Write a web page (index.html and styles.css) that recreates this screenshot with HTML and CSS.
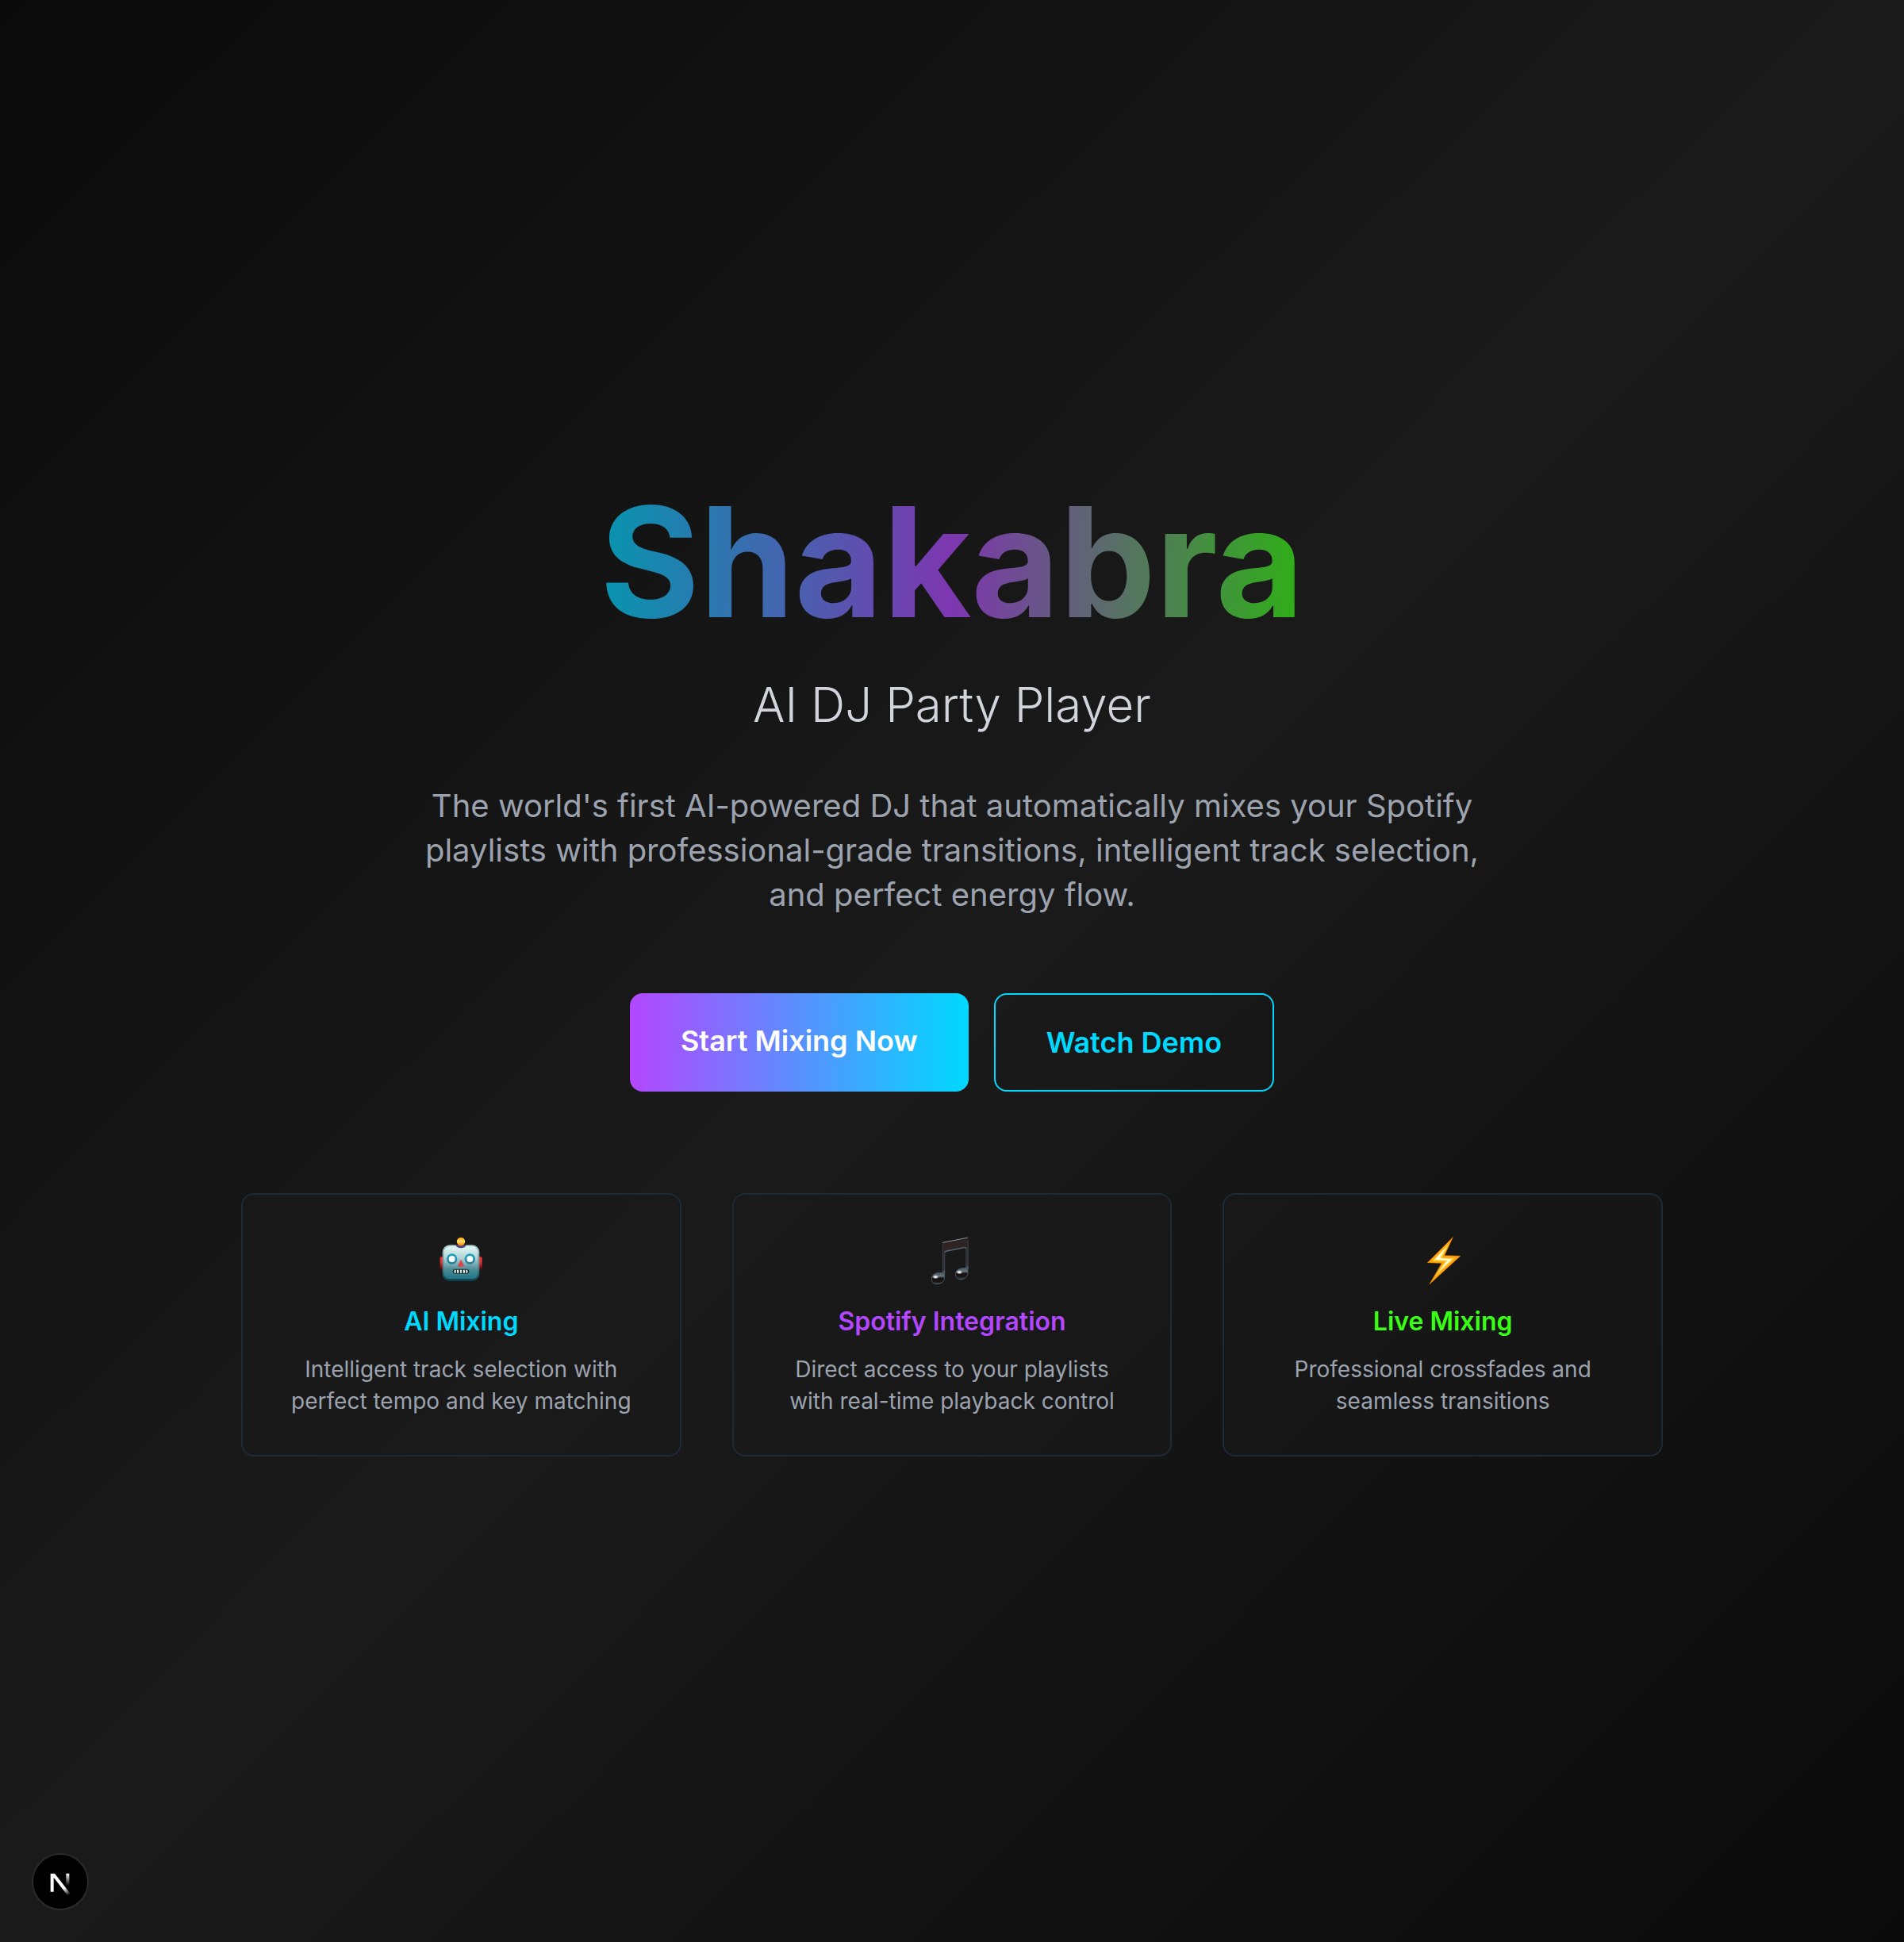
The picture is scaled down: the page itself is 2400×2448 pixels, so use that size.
FILE: index.html
```html
<!DOCTYPE html>
<html lang="en">
<head>
<meta charset="utf-8">
<meta name="viewport" content="width=device-width, initial-scale=1">
<title>Shakabra - AI DJ Party Player</title>
<link rel="stylesheet" href="styles.css">
</head>
<body>
<main class="page">
  <div class="hero">
    <h1 class="title">Shakabra</h1>
    <p class="subtitle">AI DJ Party Player</p>
    <p class="lead">The world's first AI-powered DJ that automatically mixes your Spotify playlists with professional-grade transitions, intelligent track selection, and perfect energy flow.</p>
    <div class="actions">
      <a class="btn btn-primary" href="#start">Start Mixing Now</a>
      <a class="btn btn-outline" href="#demo">Watch Demo</a>
    </div>
    <div class="features">
      <section class="card">
        <svg class="icon" viewBox="58 42 192 216" aria-hidden="true">
          <defs>
            <linearGradient id="face" x1="0" y1="0" x2="0" y2="1"><stop offset="0" stop-color="#e2f8f6"/><stop offset=".35" stop-color="#b3d3d5"/><stop offset=".7" stop-color="#4c8d98"/><stop offset="1" stop-color="#1f7484"/></linearGradient>
            <linearGradient id="rim" x1="0" y1="0" x2="0" y2="1"><stop offset="0" stop-color="#a9c9c8"/><stop offset=".5" stop-color="#6d9297"/><stop offset="1" stop-color="#053d49"/></linearGradient>
            <linearGradient id="ear" x1="0" y1="0" x2="0" y2="1"><stop offset="0" stop-color="#f0282c"/><stop offset=".4" stop-color="#e03a3d"/><stop offset="1" stop-color="#690006"/></linearGradient>
            <linearGradient id="bulb" x1="0" y1="0" x2="0" y2="1"><stop offset="0" stop-color="#ff9a08"/><stop offset=".45" stop-color="#ffe06a"/><stop offset="1" stop-color="#f58a00"/></linearGradient>
            <linearGradient id="eye" x1="0" y1="0" x2="0" y2="1"><stop offset="0" stop-color="#13a5c4"/><stop offset="1" stop-color="#2a7d95"/></linearGradient>
          </defs>
          <rect x="75" y="133" width="14" height="46" rx="4" fill="url(#ear)"/>
          <rect x="220" y="133" width="14" height="46" rx="4" fill="url(#ear)"/>
          <rect x="84" y="88" width="140" height="137" rx="27" fill="url(#rim)"/>
          <rect x="90" y="93" width="128" height="124" rx="22" fill="url(#face)"/>
          <path d="M134 87h40q-3 13-20 13t-20-13z" fill="#54437d"/>
          <circle cx="154" cy="75" r="15.500" fill="url(#bulb)"/>
          <circle cx="120" cy="141" r="20" fill="url(#eye)"/>
          <circle cx="188" cy="141" r="20" fill="url(#eye)"/>
          <circle cx="120" cy="141" r="12" fill="#fff"/>
          <circle cx="188" cy="141" r="12" fill="#fff"/>
          <path d="M154 143l13 26q-13 4-26 0z" fill="#d9474c"/>
          <rect x="123" y="179" width="62" height="18" rx="9" fill="#142d33"/>
          <path d="M130 182h5v12h-5q-4-6 0-12zM139 182h7v12h-7zM151 182h6v12h-6zM162 182h7v12h-7zM173 182h5q4 6 0 12h-5z" fill="#e9e6da"/>
        </svg>
        <h2 class="card-title cyan">AI Mixing</h2>
        <p class="card-text">Intelligent track selection with perfect tempo and key matching</p>
      </section>
      <section class="card">
        <svg class="icon" viewBox="54 42 192 216" aria-hidden="true">
          <defs>
            <linearGradient id="beam" x1="0" y1="0" x2="0" y2="1"><stop offset="0" stop-color="#2a2526"/><stop offset="1" stop-color="#35241f"/></linearGradient>
            <linearGradient id="head" x1="0" y1="0" x2="0" y2="1"><stop offset="0" stop-color="#3a4750"/><stop offset=".4" stop-color="#66727a"/><stop offset=".56" stop-color="#17110f"/><stop offset=".8" stop-color="#1a1512"/><stop offset="1" stop-color="#34454f"/></linearGradient>
            <radialGradient id="glint"><stop offset="0" stop-color="#fff"/><stop offset=".35" stop-color="#e6ebee"/><stop offset="1" stop-color="#aab4ba" stop-opacity="0"/></radialGradient>
          </defs>
          <path d="M119 84V198M207 68V180" stroke="#4a5259" stroke-width="9"/>
          <path d="M119 84V198M207 68V180" stroke="#24282b" stroke-width="4"/>
          <path d="M116 80L209 62V97L122 115H116Z" fill="url(#beam)"/>
          <path d="M115 79L209 60.500" stroke="#8b949b" stroke-width="3" stroke-linecap="round"/>
          <path d="M123 115Q125 112 130 111L196 98Q202 97 203 101" fill="none" stroke="#4d6c80" stroke-width="4"/>
          <path d="M122 187V210C122 226 110 236 93 236C79 236 72 227 73 214C75 199 90 193 104 193C112 193 117 191 118 186Z" fill="url(#head)" stroke="#455967" stroke-width="3" stroke-linejoin="round"/>
          <path d="M210 169V192C210 208 199 218 183 218C169 218 163 209 164 196C166 181 179 176 192 176C201 176 206 173 207 168Z" fill="url(#head)" stroke="#455967" stroke-width="3" stroke-linejoin="round"/>
          <ellipse cx="88" cy="209" rx="13" ry="8" fill="url(#glint)"/>
          <ellipse cx="178" cy="191" rx="13" ry="8" fill="url(#glint)"/>
        </svg>
        <h2 class="card-title purple">Spotify Integration</h2>
        <p class="card-text">Direct access to your playlists with real-time playback control</p>
      </section>
      <section class="card">
        <svg class="icon" viewBox="50 42 192 216" aria-hidden="true">
          <path d="M183 59L87 155L141 157L95 236L211 130L151 128Z" fill="#ffa50f" stroke="#e47c00" stroke-width="2" stroke-linejoin="round"/>
          <path d="M170 80L105 149H154L114 209L191 137H142Z" fill="#ffd034"/>
          <path d="M160 94L114 143L162 147L126 193L180 142L134 138Z" fill="#fffbd8"/>
        </svg>
        <h2 class="card-title green">Live Mixing</h2>
        <p class="card-text">Professional crossfades and seamless transitions</p>
      </section>
    </div>
  </div>
</main>
<button class="dev-badge" type="button" aria-label="Open developer tools">
  <svg class="dev-logo" viewBox="-4 -2 285 285" aria-hidden="true">
    <defs>
      <linearGradient id="diag" gradientUnits="userSpaceOnUse" x1="138" y1="145" x2="170" y2="190"><stop offset="0" stop-color="#fff"/><stop offset=".4" stop-color="#fff"/><stop offset="1" stop-color="#fff" stop-opacity="0"/></linearGradient>
      <linearGradient id="stem" gradientUnits="userSpaceOnUse" x1="0" y1="108" x2="0" y2="154"><stop offset="0" stop-color="#fff"/><stop offset="1" stop-color="#fff" stop-opacity="0"/></linearGradient>
    </defs>
    <path d="M100 177V108H116L175 184L164 190L112 123V177Z" fill="url(#diag)"/>
    <rect x="159" y="108" width="12" height="46" fill="url(#stem)"/>
  </svg>
</button>
</body>
</html>
```
FILE: styles.css
```css
*,
*::before,
*::after {
  box-sizing: border-box;
}

body {
  margin: 0;
  background: #0a0a0a;
  color: #fff;
  font-family: Inter, "Liberation Sans", sans-serif;
}

h1,
h2,
p {
  margin: 0;
}

.page {
  min-height: 100vh;
  display: flex;
  align-items: center;
  justify-content: center;
  padding: 32px;
  background: linear-gradient(135deg, #0a0a0a 0%, #1a1a1a 50%, #0a0a0a 100%);
}

.hero {
  width: 100%;
  max-width: 1792px;
  display: flex;
  flex-direction: column;
  align-items: center;
  text-align: center;
}

.title {
  margin-bottom: 48px;
  font-size: 192px;
  line-height: 192px;
  font-weight: 700;
  color: transparent;
  background: linear-gradient(90deg, #00d9ff, #b347ff, #39ff14);
  -webkit-background-clip: text;
  background-clip: text;
  opacity: 0.66;
}

.subtitle {
  margin-bottom: 64px;
  font-size: 60px;
  line-height: 72px;
  font-weight: 300;
  color: #d1d5db;
}

.lead {
  max-width: 1344px;
  margin-bottom: 96px;
  font-size: 40px;
  line-height: 56px;
  color: #9ca3af;
}

.actions {
  display: flex;
  flex-wrap: wrap;
  justify-content: center;
  gap: 32px;
  margin-bottom: 128px;
}

.btn {
  padding: 32px 64px;
  border-radius: 16px;
  font-size: 36px;
  line-height: 56px;
  font-weight: 600;
  text-decoration: none;
}

.btn-primary {
  color: #fff;
  background: linear-gradient(90deg, #b347ff, #00d9ff);
}

.btn-outline {
  color: #00d9ff;
  border: 2px solid #00d9ff;
}

.features {
  width: 100%;
  display: grid;
  grid-template-columns: repeat(auto-fit, minmax(480px, 1fr));
  gap: 64px;
}

.card {
  display: flex;
  flex-direction: column;
  align-items: center;
  padding: 48px;
  border: 2px solid #1f2937;
  border-radius: 16px;
  background: rgba(26, 26, 26, 0.5);
}

.icon {
  width: 64px;
  height: 72px;
  margin-bottom: 16px;
}

.card-title {
  margin-bottom: 16px;
  font-size: 32px;
  line-height: 48px;
  font-weight: 600;
}

.card-text {
  font-size: 28px;
  line-height: 40px;
  color: #9ca3af;
}

.cyan {
  color: #00d9ff;
}

.purple {
  color: #b347ff;
}

.green {
  color: #39ff14;
}

.dev-badge {
  position: fixed;
  left: 40px;
  bottom: 40px;
  width: 72px;
  height: 72px;
  display: flex;
  align-items: center;
  justify-content: center;
  padding: 0;
  border: 2px solid #2b2b2b;
  border-radius: 50%;
  background: #000;
}

.dev-logo {
  flex: none;
  width: 95px;
  height: 95px;
}
```
